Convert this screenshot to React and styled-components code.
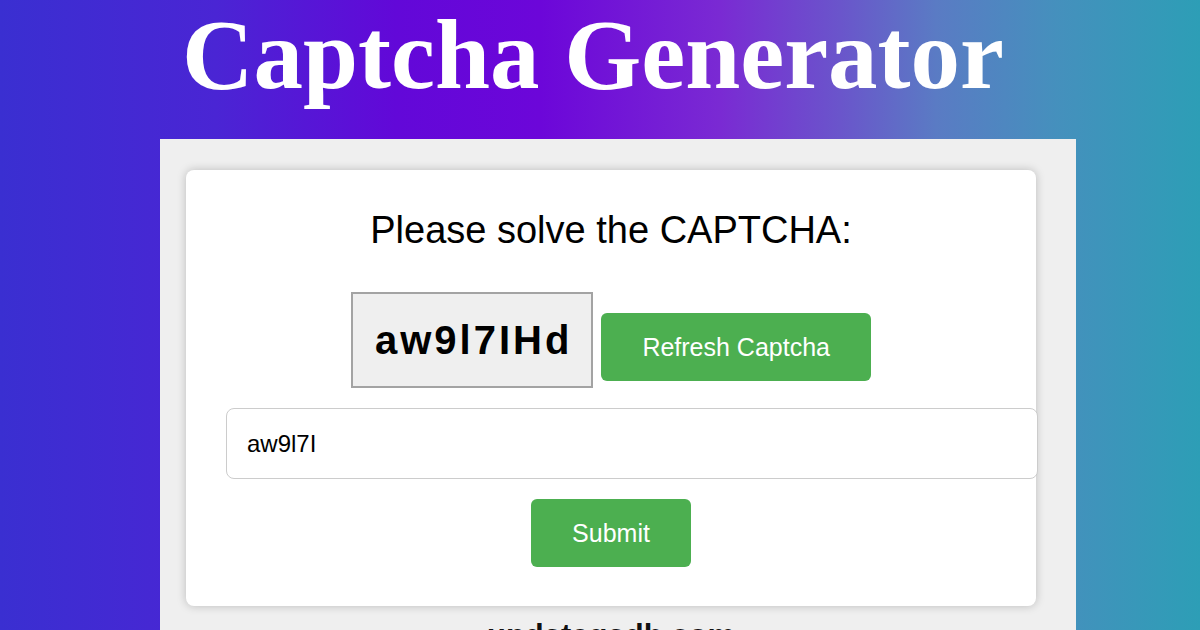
import styled, { createGlobalStyle } from "styled-components"

const Global = createGlobalStyle`
    html, body {
        margin: 0;
        padding: 0;
    }
    body {
        font-family: "Liberation Sans", Arial, sans-serif;
    }
`

export default function App() {
    return (
        <Pagina>
            <Global />
            <Titulo>Captcha Generator</Titulo>
            <Painel>
                <Cartao>
                    <Pergunta>Please solve the CAPTCHA:</Pergunta>
                    <LinhaCaptcha>
                        <CaixaCaptcha>aw9l7IHd</CaixaCaptcha>
                        <Botao $topo={21}>Refresh Captcha</Botao>
                    </LinhaCaptcha>
                    <Entrada type="text" defaultValue="aw9l7I" />
                    <Acoes>
                        <Botao>Submit</Botao>
                    </Acoes>
                </Cartao>
                <Rodape>updategadh.com</Rodape>
            </Painel>
        </Pagina>
    )
}

const Pagina = styled.div`
    width: 1200px;
    height: 630px;
    overflow: hidden;
    background: linear-gradient(90deg, #3a2fd1 0%, #4a25d4 18%, #6208d8 33%, #6c06d9 45%, #7a2ad3 60%, #6a55cb 70%, #5a7bc4 78%, #4590bd 88%, #2d9eb6 100%);
`

const Titulo = styled.h1`
    margin: 0;
    height: 139px;
    box-sizing: border-box;
    padding: 5px 14px 0 0;
    text-align: center;
    font-family: "Liberation Serif", "Times New Roman", serif;
    font-weight: 700;
    font-size: 99px;
    line-height: 99px;
    color: #ffffff;
`

const Painel = styled.div`
    width: 916px;
    height: 491px;
    margin-left: 160px;
    box-sizing: border-box;
    padding: 31px 40px 0 26px;
    background-color: #efefef;
`

const Cartao = styled.div`
    width: 850px;
    box-sizing: border-box;
    padding: 39px 40px 39px;
    background-color: #ffffff;
    border-radius: 8px;
    box-shadow: 0 0 10px rgba(0, 0, 0, 0.22);
`

const Pergunta = styled.h2`
    margin: 0;
    text-align: center;
    font-size: 38px;
    font-weight: 400;
    color: #000000;
`

const LinhaCaptcha = styled.div`
    display: flex;
    justify-content: center;
    align-items: flex-start;
    gap: 8px;
    margin-top: 40px;
`

const CaixaCaptcha = styled.div`
    padding: 25px 19px 25px 22px;
    border: 2px solid #a3a3a3;
    background-color: #efefef;
    font-size: 40px;
    font-weight: 700;
    letter-spacing: 3px;
    line-height: 42px;
    color: #000000;
`

const Botao = styled.button`
    margin-top: ${(props) => props.$topo || 0}px;
    padding: 19px 41px;
    border: none;
    border-radius: 6px;
    background-color: #4caf50;
    color: #ffffff;
    font-family: "Liberation Sans", Arial, sans-serif;
    font-size: 25px;
    line-height: 30px;
    cursor: pointer;
`

const Entrada = styled.input`
    display: block;
    width: 100%;
    margin-top: 20px;
    padding: 21px 20px;
    border: 1px solid #cccccc;
    border-radius: 8px;
    font-family: "Liberation Sans", Arial, sans-serif;
    font-size: 24px;
    line-height: 27px;
    color: #000000;
    outline: none;
`

const Acoes = styled.div`
    display: flex;
    justify-content: center;
    margin-top: 20px;
`

const Rodape = styled.p`
    margin: 12px 0 0;
    text-align: center;
    font-size: 31px;
    font-weight: 700;
    color: #111111;
`
